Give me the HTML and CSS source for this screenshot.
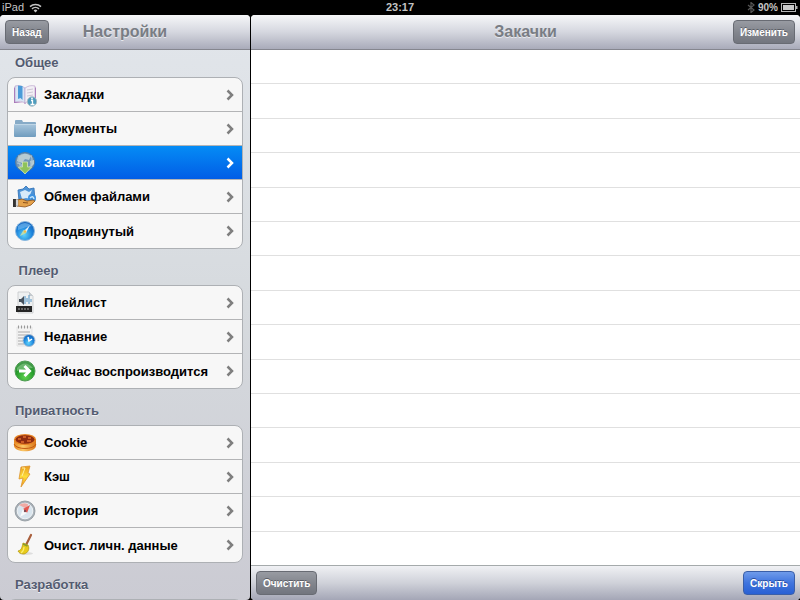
FILE: index.html
```html
<!DOCTYPE html>
<html lang="ru">

<head>
    <meta charset="UTF-8">
    <meta name="viewport" content="width=device-width, initial-scale=1.0">
    <title>Настройки</title>
    <link rel="stylesheet" href="styles.css">
</head>

<body>
    <!-- shared chevron and icon fills -->
    <svg class="defs" width="0" height="0">
        <symbol id="chevron" viewBox="0 0 8 12">
            <path d="M1.5 1.5 6 6l-4.5 4.5" fill="none" stroke="currentColor" stroke-width="2.5" />
        </symbol>
        <linearGradient id="folder" x1="0" y1="0" x2="0" y2="1">
            <stop offset="0" stop-color="#a9c6dc" />
            <stop offset="1" stop-color="#6f9cbe" />
        </linearGradient>
        <radialGradient id="blue" cx=".45" cy=".7" r=".7">
            <stop offset="0" stop-color="#5ed2fb" />
            <stop offset=".6" stop-color="#1c84dc" />
            <stop offset="1" stop-color="#1560b8" />
        </radialGradient>
        <radialGradient id="green" cx=".5" cy=".8" r=".8">
            <stop offset="0" stop-color="#5fd14e" />
            <stop offset=".6" stop-color="#249a2b" />
            <stop offset="1" stop-color="#4f9a55" />
        </radialGradient>
        <linearGradient id="bolt" x1="0" y1="0" x2="0" y2="1">
            <stop offset="0" stop-color="#e99a1c" />
            <stop offset=".5" stop-color="#fddc3c" />
            <stop offset="1" stop-color="#ef9a1a" />
        </linearGradient>
        <linearGradient id="cookie" x1="0" y1="0" x2="1" y2="0">
            <stop offset="0" stop-color="#e58a24" />
            <stop offset=".4" stop-color="#fbc765" />
            <stop offset="1" stop-color="#d9761a" />
        </linearGradient>
    </svg>

    <div class="status">
        <div class="status-left">
            <span>iPad</span>
            <svg width="13" height="10" viewBox="0 0 13 10" fill="none" stroke="#c4c4c4" stroke-width="1.5">
                <path d="M1 3.6a8 8 0 0 1 11 0M3 5.9a5 5 0 0 1 7 0" />
                <path d="M4.6 7.5a2.8 2.8 0 0 1 3.8 0L6.5 9.6z" fill="#c4c4c4" stroke="none" />
            </svg>
        </div>
        <div class="status-time">23:17</div>
        <div class="status-right">
            <svg width="8" height="11" viewBox="0 0 8 11" fill="none" stroke="#565656" stroke-width="1.2">
                <path d="M1 3l6 5-3 2.500V.5L7 3 1 8" />
            </svg>
            <span>90%</span>
            <svg width="17" height="9" viewBox="0 0 17 9">
                <rect x=".5" y=".5" width="14" height="8" fill="none" stroke="#b5b5b5" />
                <rect x="2" y="2" width="11" height="5" fill="#c8c8c8" />
                <rect x="15" y="3" width="1.5" height="3" fill="#b5b5b5" />
            </svg>
        </div>
    </div>

    <div class="split">
        <aside class="sidebar">
            <header class="bar">
                <button class="btn" type="button">Назад</button>
                <h1>Настройки</h1>
            </header>
            <nav class="menu">
                <h2>Общее</h2>
                <ul>
                    <li><a href="#">
                        <svg class="icon" viewBox="0 0 24 24">
                            <path d="M1 5l1-1v15l9 1 1 1 1-1 9-1V4l1 1v15H1z" fill="#a873b8" />
                            <path d="M2 3c4-1 7 0 10 2v15c-3-2-6-2-10-1z" fill="#d9e6f5" stroke="#b59bc8" stroke-width=".6" />
                            <path d="M22 3c-4-1-7 0-10 2v15c3-2 6-2 10-1z" fill="#f2eff5" stroke="#b59bc8" stroke-width=".6" />
                            <path d="M5 2.5l4.5.5v14l-2-2-2.500 1z" fill="#4b9bd8" />
                            <path d="M14 7l6-1M14 10l6-1M14 13l6-1" stroke="#cec7d4" />
                            <circle cx="19" cy="18.5" r="4.7" fill="#4d9cbd" stroke="#a9bcc4" />
                            <path d="M18 17.5h1.5v4M17.5 21.5h4" stroke="#fff" stroke-width="1.3" fill="none" />
                            <circle cx="19" cy="15.5" r=".9" fill="#fff" />
                        </svg>
                        <span>Закладки</span>
                        <svg class="arrow"><use href="#chevron" /></svg>
                    </a></li>
                    <li><a href="#">
                        <svg class="icon" viewBox="0 0 24 24">
                            <path d="M2 4q0-1 1-1h6l1 2h12q1 0 1 1v12H2z" fill="#87abc7" />
                            <path d="M1 7h22v12q0 1-1 1H2q-1 0-1-1z" fill="url(#folder)" />
                            <path d="M1 7.5h22" stroke="#bfd6e6" />
                        </svg>
                        <span>Документы</span>
                        <svg class="arrow"><use href="#chevron" /></svg>
                    </a></li>
                    <li><a class="active" href="#">
                        <svg class="icon" viewBox="0 0 24 24">
                            <circle cx="12" cy="11" r="9.5" fill="#7398b8" stroke="#577b9b" />
                            <path d="M5 6q6-6 13-1l-2 4-4-1-3 4-5-2zM17 10l4-1v4l-3 3z" fill="#b7cbd2" />
                            <path d="M4 12l4 1 2 5M6 4q-2 8 4 15M18 4q3 8-3 14" fill="none" stroke="#a9c3d4" />
                            <path d="M9.5 11h5v5h4L12 23l-6.500-7h4z" fill="#8fc35b" stroke="#d5e7b8" stroke-width=".8" />
                        </svg>
                        <span>Закачки</span>
                        <svg class="arrow"><use href="#chevron" /></svg>
                    </a></li>
                    <li><a href="#">
                        <svg class="icon" viewBox="0 0 24 24">
                            <path d="M5 5l5-1 3-3 3 3 5-1 1 13-8 3-8-3z" fill="#4e94d7" stroke="#2c6db4" stroke-width=".8" />
                            <path d="M7 7l5-2 4 2 3-2-2 5 2 4-6-1-4 1z" fill="#d6eaf9" />
                            <circle cx="19" cy="13" r="4" fill="#3f92df" />
                            <path d="M17 13q3-3 4 1" stroke="#c3e4fa" stroke-width="1.5" fill="none" />
                            <path d="M4 15l5-1 5 2 6-1 2 1-4 4-6 2-8-1z" fill="#e5a24b" stroke="#8c511b" stroke-width=".8" />
                            <path d="M10 17.5l5 .5" stroke="#8c511b" />
                            <path d="M0 14h3v8H0z" fill="#333" />
                            <path d="M3 14.5h2V21H3z" fill="#f4f4f4" stroke="#777" stroke-width=".5" />
                        </svg>
                        <span>Обмен файлами</span>
                        <svg class="arrow"><use href="#chevron" /></svg>
                    </a></li>
                    <li><a href="#">
                        <svg class="icon" viewBox="0 0 24 24">
                            <circle cx="12" cy="12" r="9.5" fill="url(#blue)" stroke="#8bb8de" />
                            <path d="M5 7q7-6 14 0-7 1-14 4z" fill="#7bbdf0" opacity=".6" />
                            <path d="M17 6l-4 8-2-2z" fill="#e8f3fb" />
                            <path d="M7 17l3.500-6 3 3z" fill="#b8dcb2" />
                            <circle cx="12" cy="12.5" r="1.3" fill="#f0be47" />
                        </svg>
                        <span>Продвинутый</span>
                        <svg class="arrow"><use href="#chevron" /></svg>
                    </a></li>
                </ul>

                <h2>&nbsp;Плеер</h2>
                <ul>
                    <li><a href="#">
                        <svg class="icon" viewBox="0 0 24 24">
                            <path d="M5 1h11l4 4v17H5z" fill="#eef0f1" stroke="#c5c8ca" stroke-width=".8" />
                            <path d="M16 1v4h4z" fill="#c3c9ce" />
                            <path d="M6 8h2l3-3v9l-3-3H6z" fill="#47525e" />
                            <path d="M12 13V5M14 11V7M16 13V4M18 11V8" stroke="#76a9cf" stroke-width="1.3" />
                            <path d="M3 15h16v6H3z" fill="#252525" />
                            <path d="M5 18h12" stroke="#aaa" stroke-dasharray="2 1" />
                        </svg>
                        <span>Плейлист</span>
                        <svg class="arrow"><use href="#chevron" /></svg>
                    </a></li>
                    <li><a href="#">
                        <svg class="icon" viewBox="0 0 24 24">
                            <path d="M4 2h15v19H4z" fill="#f3f3f3" stroke="#ddd" stroke-width=".7" />
                            <path d="M5 2h14" stroke="#999" stroke-width="3" stroke-dasharray="1 2" />
                            <path d="M5 7h12M5 10h10M5 13h6M5 16h5M5 19h6" stroke="#aaa" stroke-width="1.2" />
                            <circle cx="16" cy="15.5" r="6" fill="url(#blue)" stroke="#a9c0d4" />
                            <path d="M15 12l1 4 3-2" fill="none" stroke="#fff" stroke-width="1.5" />
                        </svg>
                        <span>Недавние</span>
                        <svg class="arrow"><use href="#chevron" /></svg>
                    </a></li>
                    <li><a href="#">
                        <svg class="icon" viewBox="0 0 24 24">
                            <circle cx="12" cy="12" r="10" fill="url(#green)" stroke="#4d9b51" />
                            <path d="M4 9q8-9 16 0-8 0-16 3z" fill="#a3d3a3" opacity=".5" />
                            <path d="M6 12h9M11.500 7l5 5-5 5" fill="none" stroke="#fff" stroke-width="3" />
                        </svg>
                        <span>Сейчас воспроизводится</span>
                        <svg class="arrow"><use href="#chevron" /></svg>
                    </a></li>
                </ul>

                <h2>Приватность</h2>
                <ul>
                    <li><a href="#">
                        <svg class="icon" viewBox="0 0 24 24">
                            <path d="M1 8v7c1 7 21 7 22 0V8z" fill="url(#cookie)" />
                            <path d="M1 13c2 6 20 6 22 0" fill="none" stroke="#c65c13" />
                            <ellipse cx="12" cy="8.5" rx="11" ry="5.5" fill="#e78324" />
                            <ellipse cx="12" cy="8.5" rx="9.5" ry="4.3" fill="#8f2c10" />
                            <path d="M5 8h3M10 6h3M15 7h3M8 11h3M14 10h4" stroke="#e46d2c" stroke-width="1.5" />
                        </svg>
                        <span>Cookie</span>
                        <svg class="arrow"><use href="#chevron" /></svg>
                    </a></li>
                    <li><a href="#">
                        <svg class="icon" viewBox="0 0 24 24">
                            <path d="M8 2l9-1-2 7 2 1-9 13 2-9-4 1z" fill="url(#bolt)" stroke="#dc9430" stroke-width=".8" />
                            <path d="M9 3h3L9 11" fill="none" stroke="#fff0a0" />
                        </svg>
                        <span>Кэш</span>
                        <svg class="arrow"><use href="#chevron" /></svg>
                    </a></li>
                    <li><a href="#">
                        <svg class="icon" viewBox="0 0 24 24">
                            <circle cx="12" cy="12" r="10" fill="#a9b2b9" stroke="#8b949b" stroke-width=".8" />
                            <circle cx="12" cy="12" r="7.8" fill="#d9e5ee" stroke="#eef2f5" />
                            <path d="M6 6q4-3 9-1l-1 5z" fill="#f0aaa4" />
                            <path d="M17 6l-3 8-4-4z" fill="#e4574f" />
                            <path d="M7 18l3-8 4 4z" fill="#f8fafb" />
                            <circle cx="12" cy="12" r="1.2" fill="#7d4a52" />
                        </svg>
                        <span>История</span>
                        <svg class="arrow"><use href="#chevron" /></svg>
                    </a></li>
                    <li><a href="#">
                        <svg class="icon" viewBox="0 0 24 24">
                            <ellipse cx="13" cy="20.5" rx="7" ry="1.5" fill="#dedede" />
                            <path d="M18 2l-5 10" stroke="#a95f3c" stroke-width="2.2" stroke-linecap="round" />
                            <path d="M10 10l5 2c2 4 0 8-4 9-3 0-5-1-6-3 4-1 4-4 5-8z" fill="#e8cb1b" stroke="#b59a12" stroke-width=".8" />
                            <path d="M10 11l4.500 2" stroke="#8a9b2c" stroke-width="1.5" />
                            <path d="M11 14q0 4-3 6" stroke="#fbed71" fill="none" stroke-width="1.2" />
                        </svg>
                        <span>Очист. личн. данные</span>
                        <svg class="arrow"><use href="#chevron" /></svg>
                    </a></li>
                </ul>

                <h2>Разработка</h2>
                <ul>
                    <li></li>
                </ul>
            </nav>
        </aside>

        <main class="content">
            <header class="bar">
                <h1>Закачки</h1>
                <button class="btn btn-right" type="button">Изменить</button>
            </header>
            <div class="rows">
                <div></div>
                <div></div>
                <div></div>
                <div></div>
                <div></div>
                <div></div>
                <div></div>
                <div></div>
                <div></div>
                <div></div>
                <div></div>
                <div></div>
                <div></div>
                <div></div>
                <div></div>
            </div>
            <footer class="toolbar">
                <button class="btn" type="button">Очистить</button>
                <button class="btn btn-blue" type="button">Скрыть</button>
            </footer>
        </main>
    </div>
</body>

</html>
```
FILE: styles.css
```css
* {
    margin: 0;
    padding: 0;
    box-sizing: border-box;
}

body {
    display: flex;
    flex-direction: column;
    height: 100vh;
    overflow: hidden;
    background: #000;
    font-family: "Liberation Sans", Arial, sans-serif;
}

.defs {
    position: absolute;
}

/* status bar */
.status {
    display: grid;
    grid-template-columns: 1fr auto 1fr;
    align-items: center;
    height: 15px;
    padding: 0 2px;
    color: #c4c4c4;
    font-size: 11px;
    font-weight: bold;
    line-height: 15px;
}

.status-left,
.status-right {
    display: flex;
    align-items: center;
    gap: 5px;
}

.status-left {
    font-weight: normal;
}

.status-right {
    justify-content: flex-end;
    gap: 3px;
    font-size: 10px;
}

.split {
    flex: 1;
    display: flex;
    gap: 1px;
    min-height: 0;
}

.sidebar,
.content {
    display: flex;
    flex-direction: column;
    overflow: hidden;
    border-radius: 4px;
}

.sidebar {
    width: 250px;
    background: linear-gradient(#e2e6eb, #d6dade 50%, #cbcbd3);
}

.content {
    flex: 1;
    background: #fff;
}

/* top bars */
.bar {
    flex: none;
    display: grid;
    grid-template-columns: 1fr auto 1fr;
    align-items: center;
    height: 35px;
    padding: 0 5px;
    border-bottom: 1px solid #85868f;
    background: linear-gradient(#f6f7f9, #d5d7df 50%, #a9abba);
}

.bar h1 {
    grid-column: 2;
    color: #797d84;
    font-size: 16px;
    line-height: 20px;
    text-shadow: 0 1px 0 #e8e9ee;
}

.btn {
    justify-self: start;
    height: 24px;
    padding: 0 6px;
    border: 1px solid #686b73;
    border-radius: 4px;
    background: linear-gradient(#989ba2, #83868e 50%, #72757e);
    color: #fff;
    font-family: inherit;
    font-size: 10px;
    font-weight: bold;
    text-shadow: 0 -1px 0 #5b5e66;
}

.btn-right {
    justify-self: end;
}

.btn-blue {
    border-color: #3a5fa8;
    background: linear-gradient(#6f9bea, #3f74de 50%, #2860d4);
    text-shadow: 0 -1px 0 #2c4f9c;
}

/* settings menu */
.menu {
    flex: 1;
    min-height: 0;
    padding: 0 7px;
    overflow: hidden;
}

.menu h2 {
    padding: 13px 8px 5px;
    color: #535b70;
    font-size: 13px;
    line-height: 18px;
    text-shadow: 0 1px 0 #eef0f3;
}

.menu h2:first-child {
    padding-top: 4px;
}

.menu ul {
    border: 1px solid #adb0b4;
    border-radius: 8px;
    background: #f7f7f7;
    list-style: none;
    overflow: hidden;
}

.menu li {
    height: 34px;
    border-bottom: 1px solid #b3b4b6;
}

.menu li:last-child {
    border-bottom: 0;
}

.menu a {
    display: flex;
    align-items: center;
    gap: 7px;
    height: 100%;
    padding: 0 8px 0 5px;
    color: #000;
    font-size: 13px;
    font-weight: bold;
    text-decoration: none;
    white-space: nowrap;
}

.menu a.active {
    background: linear-gradient(#058cf5, #015de6);
    color: #fff;
}

.menu a span {
    flex: 1;
}

.icon {
    flex: none;
    width: 24px;
    height: 24px;
}

.arrow {
    flex: none;
    width: 8px;
    height: 12px;
    color: #7f7f7f;
}

.active .arrow {
    color: #fff;
}

/* downloads list */
.rows {
    flex: 1;
    display: flex;
    flex-direction: column;
}

.rows div {
    flex: 1;
    border-bottom: 1px solid #e0e0e0;
}

.rows div:last-child {
    border-bottom-color: #a5aaab;
}

.toolbar {
    flex: none;
    display: flex;
    align-items: center;
    justify-content: space-between;
    height: 34px;
    padding: 0 5px;
    background: linear-gradient(#f0f1f4, #cfd1d9 50%, #a4a6b6);
}
```
